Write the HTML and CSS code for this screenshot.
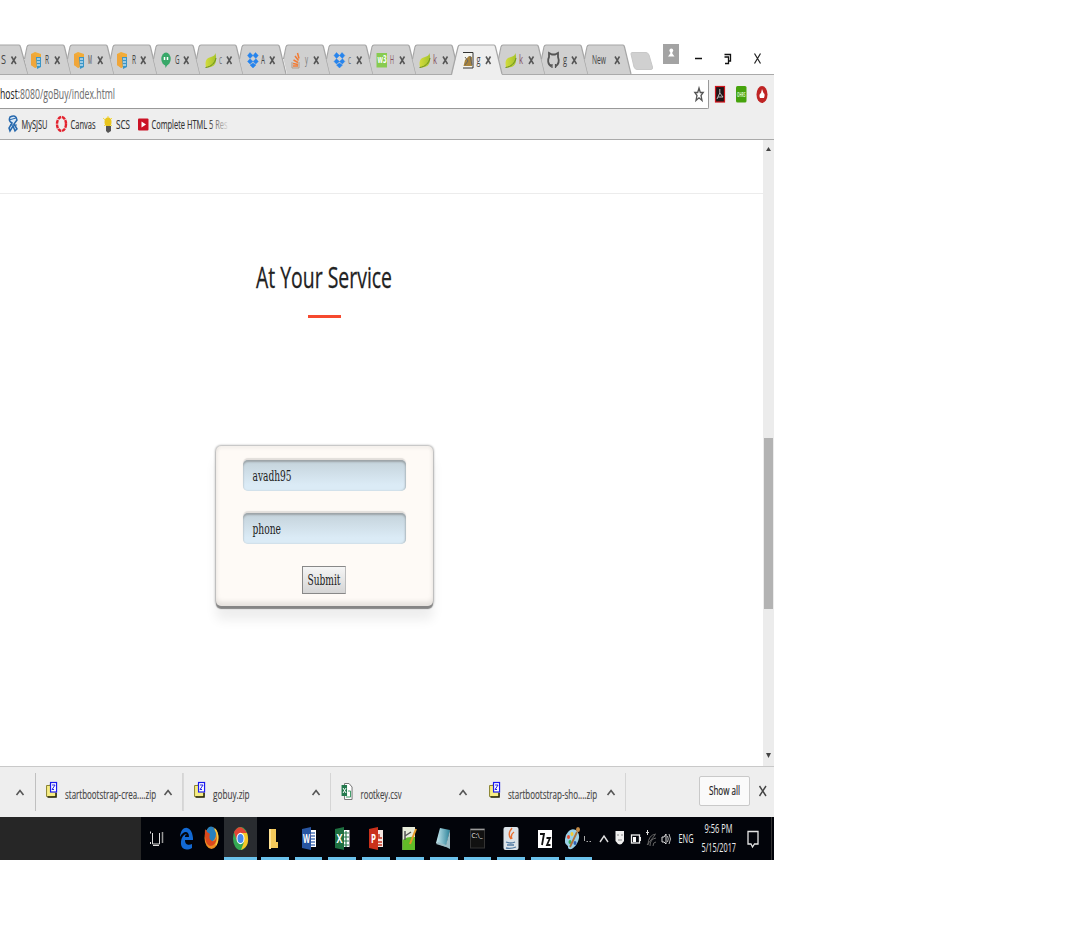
FILE: index.html
```html
<!DOCTYPE html>
<html lang="en">
<head>
<meta charset="utf-8">
<title>goBuy</title>
<link rel="stylesheet" href="styles.css">
</head>
<body>
<svg class="defs" width="0" height="0">
  <defs>
    <linearGradient id="leafg" x1="0" x2="1"><stop offset="0" stop-color="#d3dc3c"/><stop offset="1" stop-color="#a5c32c"/></linearGradient>
    <symbol id="shape" overflow="visible"><path d="M3 1L-.5 15L3 30H46L39 1Z" fill="#d0d0d0"/><path d="M-.5 15L2 3Q2.500 1 4 1H38Q39 1 39.500 3L46 30" fill="none" stroke="#a6a6a6" stroke-width="1.200"/></symbol>
    <symbol id="x" overflow="visible"><path d="M30 12.500L34.500 20M34.500 12.500L30 20" stroke="#555" stroke-width="1.500"/></symbol>
    <symbol id="aws" overflow="visible"><path d="M6 10L10 8L16 10V21L10 24L6 21Z" fill="#f2ac38"/><path d="M6 10L11 12V24L6 21Z" fill="#f0a63a"/><path d="M11 13H16V23L12 25Z" fill="#3a96c8"/><path d="M12 15H15M12 18H15M12 21H15" stroke="#fff"/></symbol>
    <symbol id="leaf" overflow="visible"><path d="M14.500 9C16.500 19 14 24 5 23.500C3.500 16 6 14 10 13C13 12 14 11 14.500 9Z" fill="url(#leafg)"/><path d="M4.500 23.500C10 23 14 19 15 14" fill="none" stroke="#678b22"/></symbol>
    <symbol id="drop" overflow="visible"><path d="M8 8.500L11 11.500L8 14.500L5.500 11.500ZM13.500 8.500L16.300 11.500L13.800 14.500L11 11.500ZM8 14.800L11 17.500L8 20L5.500 17.500ZM14 14.800L16.300 17.500L13.800 20L11 17.500ZM11 19L14 21L11 24L8 21Z" fill="#2684ed" stroke="#2684ed" stroke-width=".4"/></symbol>
    <symbol id="zip" overflow="visible"><path d="M46.500 18.500H50V17.500H56V29.500Q50 30.500 46.500 29.500Z" fill="#f7ed83" stroke="#8a8432"/><path d="M47.500 30H56V26" fill="none" stroke="#29280b" stroke-width="1.500"/><rect x="50.500" y="15.500" width="6" height="9.500" fill="#fff" stroke="#1a1aee" stroke-width="1.200"/><path d="M52 18H55L52 22.500H54" fill="none" stroke="#2020e8"/></symbol>
    <symbol id="chev" overflow="visible"><path d="M0 5.500L3.500 1L7 5.500" fill="none" stroke="#555" stroke-width="1.600"/></symbol>
    <linearGradient id="note" x1="0" x2="1"><stop offset="0" stop-color="#c9eaf0"/><stop offset="1" stop-color="#2b8299"/></linearGradient>
  </defs>
</svg>
<div class="screen">
  <header>
    <div class="tabs">
      <svg class="tab first"><path d="M0 1H19Q20 1 20.500 3L28 30H0Z" fill="#d0d0d0"/><path d="M0 1H19Q20 1 20.500 3L28 30" fill="none" stroke="#a6a6a6" stroke-width="1.200"/><text x="1" y="20" textLength="5" lengthAdjust="spacingAndGlyphs">S</text><path d="M11.500 12.500L16 20M16 12.500L11.500 20" stroke="#555" stroke-width="1.500"/></svg>
      <svg class="tab"><use href="#shape"/><use href="#aws"/><text x="20" y="20" textLength="4" lengthAdjust="spacingAndGlyphs">R</text><use href="#x"/></svg>
      <svg class="tab"><use href="#shape"/><use href="#aws"/><text x="20" y="20" textLength="4" lengthAdjust="spacingAndGlyphs">M</text><use href="#x"/></svg>
      <svg class="tab"><use href="#shape"/><use href="#aws"/><text x="21" y="20" textLength="4" lengthAdjust="spacingAndGlyphs">R</text><use href="#x"/></svg>
      <svg class="tab"><use href="#shape"/><ellipse cx="12" cy="15" rx="4.700" ry="6.500" fill="#38a869"/><path d="M11 20H14L11.500 24Z" fill="#38a869"/><path d="M10.500 13V16M13.500 13V16" stroke="#fff" stroke-width="1.500"/><text x="21" y="20" textLength="4.500" lengthAdjust="spacingAndGlyphs">G</text><use href="#x"/></svg>
      <svg class="tab"><use href="#shape"/><use href="#leaf" x="4"/><text class="dim" x="22" y="20" textLength="3" lengthAdjust="spacingAndGlyphs">c</text><use href="#x"/></svg>
      <svg class="tab"><use href="#shape"/><use href="#drop" x="2"/><text x="21" y="20" textLength="4" lengthAdjust="spacingAndGlyphs">A</text><use href="#x"/></svg>
      <svg class="tab"><use href="#shape"/><path d="M8 18V24H15V18" fill="none" stroke="#b59b87"/><path d="M9 22H14M9 19.500L14 20.500M9.500 16L14 18.500M11 12L14.500 16.500M13.500 9L15 14.500" stroke="#f27b34" stroke-width="1.500"/><text class="dim" x="21" y="20" textLength="3" lengthAdjust="spacingAndGlyphs">y</text><use href="#x"/></svg>
      <svg class="tab"><use href="#shape"/><use href="#drop" x="1.500"/><text class="dim" x="21" y="20" textLength="3" lengthAdjust="spacingAndGlyphs">c</text><use href="#x"/></svg>
      <svg class="tab"><use href="#shape"/><rect x="6.500" y="9" width="10.500" height="14.500" fill="#87cb50"/><text class="w3" x="7.500" y="19" textLength="9" lengthAdjust="spacingAndGlyphs">w3</text><text class="red" x="20" y="20" textLength="4" lengthAdjust="spacingAndGlyphs">H</text><use href="#x"/></svg>
      <svg class="tab"><use href="#shape"/><use href="#leaf" x="2"/><text class="red" x="20" y="20" textLength="4" lengthAdjust="spacingAndGlyphs">k</text><use href="#x"/></svg>
      <svg class="tab active"><path d="M-4 31L2 3Q2.500 1 4 1H38Q39 1 39.500 3L46 31Z" fill="#eee"/><path d="M-4.500 30L2 3Q2.500 1 4 1H38Q39 1 39.500 3L46 30" fill="none" stroke="#a6a6a6" stroke-width="1.200"/><path d="M7 8.500H17V24H7" fill="#f5f5f0" stroke="#333"/><path d="M7.500 22L9 16L13 12L16 13V22Z" fill="#a9843c"/><path d="M9 13L12 17L9 21M14 12L16 21" fill="none" stroke="#666"/><text x="20.500" y="20" textLength="4" lengthAdjust="spacingAndGlyphs">g</text><use href="#x"/></svg>
      <svg class="tab"><use href="#shape"/><use href="#leaf" x="2"/><text class="red" x="20" y="20" textLength="4" lengthAdjust="spacingAndGlyphs">k</text><use href="#x"/></svg>
      <svg class="tab"><use href="#shape"/><path d="M9.500 22.500C5 20 6 15 7 13V9L10 10.500H13L16 9V13C17.500 17 17 20 13.500 22.500" fill="none" stroke="#555" stroke-width="1.800"/><path d="M10 20V24M13.500 20V24M7 20L10 22" stroke="#555" stroke-width="1.200"/><text x="21" y="20" textLength="4" lengthAdjust="spacingAndGlyphs">g</text><use href="#x"/></svg>
      <svg class="tab"><use href="#shape"/><text x="7" y="20" textLength="14" lengthAdjust="spacingAndGlyphs">New</text><use href="#x"/></svg>
      <svg class="newtab" width="26" height="30"><path d="M2 8.500H16Q18 8.500 19 11L22.500 23Q23 25.500 21 25.500H7Q5 25.500 4 23L1 10Q1 8.500 2 8.500Z" fill="#d0d0d0" stroke="#c8c8c8"/></svg>
      <svg class="controls" width="110" height="30"><rect x="0" width="16" height="20" fill="#a3a3a3"/><circle cx="8.300" cy="6.500" r="1.900" fill="#fff"/><path d="M7.300 8H9.300V9.500L11.500 12.500H5L7.300 9.500Z" fill="#fff"/><path d="M32 14.500H39" stroke="#111" stroke-width="1.500"/><path d="M61.500 10.500H67.500V17H66M61.500 13H65.500V19.500H62" fill="none" stroke="#111" stroke-width="1.300"/><path d="M91.500 9.500L97.500 19.500M97.500 9.500L91.500 19.500" stroke="#222" stroke-width="1.200"/></svg>
    </div>
    <div class="toolbar">
      <div class="address">
        <svg class="addr" width="130" height="28"><text x="0" y="19" textLength="115" lengthAdjust="spacingAndGlyphs"><tspan class="host">host</tspan><tspan class="url">:8080/goBuy/index.html</tspan></text></svg>
        <svg width="14" height="28"><path d="M8 8L9.300 12.500H12.200L10 15.500L11 20.500L8 17.800L5 20.500L6 15.500L3.800 12.500H6.700Z" fill="none" stroke="#555" stroke-width="1.300"/></svg>
      </div>
      <svg class="exts" width="60" height="28"><rect x="1.500" y="6.500" width="9" height="15.500" fill="#211517" stroke="#d0141c" stroke-width="1.200"/><path d="M5.800 9V13L3 19M5.800 13L9 17L4 17" fill="none" stroke="#bbb"/><rect x="22" y="6" width="10.500" height="16.500" rx="1.500" fill="#46a30c"/><text class="badge" x="23" y="16.500" textLength="8.500" lengthAdjust="spacingAndGlyphs">OHRS</text><ellipse cx="48" cy="14.500" rx="5.500" ry="8.500" fill="#bf2424"/><path d="M46 18Q44.500 14 47 13L48 9L49.500 13Q51.500 14 50 18Z" fill="#fff"/></svg>
    </div>
    <div class="bookmarks">
      <svg width="240" height="30"><path d="M10 8Q16 5 17 11L14 15L17 20L15 22L13 17L10 22L9 19L12 14Q8 12 10 8Z" fill="#d9e8f7" stroke="#2668ad" stroke-width="1.500"/><path d="M9 11L16 9M10 16H17" stroke="#2668ad"/><text x="21.500" y="19.500" textLength="26" lengthAdjust="spacingAndGlyphs">MySJSU</text>
      <ellipse cx="61.500" cy="15" rx="4.500" ry="7" fill="none" stroke="#e3212d" stroke-width="2.400" stroke-dasharray="3.800 .8"/><text x="70.500" y="19.500" textLength="25" lengthAdjust="spacingAndGlyphs">Canvas</text>
      <path d="M103 9L112 17M112 9L104 17M108 7V12" stroke="#f3dc3c"/><ellipse cx="108" cy="13" rx="3.500" ry="4.500" fill="#e9c51d"/><path d="M106 17H111V22L108 24L106 22Z" fill="#555"/><text x="116" y="19.500" textLength="14" lengthAdjust="spacingAndGlyphs">SCS</text>
      <rect x="138" y="9.500" width="10.500" height="12" rx="1" fill="#cb1225"/><path d="M141.500 12.500L146 15.500L141.500 18.500Z" fill="#fff"/><text x="151.500" y="19.500" textLength="76" lengthAdjust="spacingAndGlyphs">Complete HTML 5 Res</text></svg>
      <i class="fade"></i>
    </div>
  </header>
  <div class="viewport">
    <main>
      <div class="rule"></div>
      <h2><svg width="150" height="44"><text x="2" y="33" textLength="136" lengthAdjust="spacingAndGlyphs">At Your Service</text></svg></h2>
      <div class="divider"></div>
      <form>
        <div class="field"><svg width="100" height="31"><text x="9.500" y="21" textLength="39" lengthAdjust="spacingAndGlyphs">avadh95</text></svg></div>
        <div class="field"><svg width="100" height="31"><text x="9.500" y="21" textLength="28.500" lengthAdjust="spacingAndGlyphs">phone</text></svg></div>
        <button type="button"><svg width="42" height="26"><text x="4.500" y="18" textLength="33" lengthAdjust="spacingAndGlyphs">Submit</text></svg></button>
      </form>
    </main>
    <aside class="scroll"><svg width="11" height="20"><path d="M3 11L5.500 7L8 11Z" fill="#444"/></svg><div class="thumb"></div><svg width="11" height="20"><path d="M3 7L5.500 12L8 7Z" fill="#444"/></svg></aside>
  </div>
  <div class="downloads">
    <svg class="dl lead" width="36" height="50"><use href="#chev" x="16.500" y="22.500"/><path d="M35.500 6V44" stroke="#c0c0c0"/></svg>
    <svg class="dl" viewBox="36 0 147.500 50"><use href="#zip"/><text x="65" y="32" textLength="91" lengthAdjust="spacingAndGlyphs">startbootstrap-crea....zip</text><use href="#chev" x="164.500" y="22.500"/><path d="M182.900 6V44" stroke="#c0c0c0"/></svg>
    <svg class="dl" viewBox="36 0 147.500 50"><use href="#zip"/><text x="65" y="32" textLength="36.500" lengthAdjust="spacingAndGlyphs">gobuy.zip</text><use href="#chev" x="164.500" y="22.500"/><path d="M182.900 6V44" stroke="#c0c0c0"/></svg>
    <svg class="dl" viewBox="36 0 147.500 50"><path d="M49.500 16.500H54L57 20V32.500H49.500Z" fill="#fff" stroke="#777"/><rect x="46.500" y="18" width="5.500" height="11" fill="#23794d"/><path d="M48 21L51 26M51 21L48 26" stroke="#fff"/><path d="M53 24H55.500V30H51" fill="none" stroke="#3a9a63"/><text x="65.500" y="32" textLength="41" lengthAdjust="spacingAndGlyphs">rootkey.csv</text><use href="#chev" x="164.500" y="22.500"/></svg>
    <svg class="dl" viewBox="36 0 147.500 50"><use href="#zip"/><text x="65" y="32" textLength="89" lengthAdjust="spacingAndGlyphs">startbootstrap-sho....zip</text><use href="#chev" x="164.500" y="22.500"/><path d="M182.900 6V44" stroke="#c0c0c0"/></svg>
    <div class="showall"><svg width="48" height="28"><text x="9" y="18" textLength="31" lengthAdjust="spacingAndGlyphs">Show all</text></svg></div>
    <svg class="close" width="10" height="50"><path d="M1.500 19L8 29M8 19L1.500 29" stroke="#444" stroke-width="1.400"/></svg>
  </div>
  <footer>
    <div class="search"></div>
    <svg class="app plain" width="30"><path d="M11.500 16V27H18.500V16M9.500 14.500V16.500M9.500 25V27M12 28.500H18" fill="none" stroke="#ddd"/><path d="M21.500 15V26" stroke="#999" stroke-width="1.500"/></svg>
    <svg class="app plain" width="30"><path d="M9 20C10 7 21 8 22 21V23H14C14 29 19 28 21 27V31C14 35 8 31 10.500 22C12 18 14 17 16 17C14 18 14 19 14 20H18C18 13 12 14 9 20Z" fill="#1269d3"/></svg>
    <svg class="app plain firefox" width="23"><ellipse cx="10.500" cy="21" rx="7" ry="11" fill="#ee8d22"/><ellipse cx="10" cy="17" rx="5" ry="7.500" fill="#2880bd"/><path d="M4 12Q6 16 9 17Q7 22 11 24Q14 25 16 20Q15 29 9 29Q3 27 4 12Z" fill="#db481d"/><path d="M14 12Q19 19 15 28" fill="none" stroke="#f8cb42" stroke-width="1.500"/></svg>
    <svg class="app chrome" width="33"><ellipse cx="16.500" cy="21.500" rx="7.500" ry="11.500" fill="#35a853"/><path d="M10 15Q16 5 23 16L17 18L13 24Z" fill="#e14434"/><path d="M23 16Q27 29 17 33L20 25L16 16Z" fill="#f6c827"/><ellipse cx="16.500" cy="21.500" rx="4" ry="5.800" fill="#fff"/><ellipse cx="16.500" cy="21.500" rx="3" ry="4.500" fill="#4589ed"/></svg>
    <svg class="app run"><path d="M8 12H15V25H17V31H8Z" fill="#f4c95b"/><path d="M8 12H10V32H8Z" fill="#ffe293"/></svg>
    <svg class="app run"><path d="M15 13H21V30H15" fill="#fff"/><path d="M15 16H20M15 19H20M15 22H20M15 25H20M15 28H20" stroke="#5278b9" stroke-width="1.500"/><path d="M7 12L16 10V33L7 31Z" fill="#2855a1"/><text class="office" x="8" y="26" textLength="7" lengthAdjust="spacingAndGlyphs">W</text></svg>
    <svg class="app run"><path d="M15 13H21.500V30H15" fill="#fff"/><path d="M15 16H21M15 20H21M15 24H21M15 28H21M18 14V30" stroke="#287a4c" stroke-width="1.200"/><path d="M7 12L16 10V33L7 31Z" fill="#1e7040"/><text class="office" x="8.500" y="26" textLength="6" lengthAdjust="spacingAndGlyphs">X</text></svg>
    <svg class="app run"><path d="M15 13H21V30H15" fill="#f6e7e2"/><path d="M17 17V21H20M16 25H20M16 28H20" fill="none" stroke="#c43622" stroke-width="1.500"/><path d="M7 12L16 10V33L7 31Z" fill="#c9301b"/><text class="office" x="9" y="26" textLength="5" lengthAdjust="spacingAndGlyphs">P</text></svg>
    <svg class="app run"><rect x="6.500" y="10" width="12.500" height="23" fill="#e7ecda"/><path d="M6.500 23Q12 19 19 20V33H6.500Z" fill="#61bc28"/><path d="M9 14V23M9 19L15 15" stroke="#555" stroke-width="1.500"/><path d="M20 12L14 27" stroke="#e79a28" stroke-width="2"/></svg>
    <svg class="app run"><path d="M10 11L20 13L16 30L6 26Z" fill="url(#note)"/><path d="M20 13V32L16 30L6 27L8 25L16 28Z" fill="#9abcc5"/></svg>
    <svg class="app run"><rect x="6.500" y="12" width="14" height="19" fill="#111" stroke="#333"/><path d="M6.500 12.500H20.500" stroke="#999" stroke-width="1.500"/><text class="cmd" x="7.500" y="21" textLength="11" lengthAdjust="spacingAndGlyphs">C:\_</text></svg>
    <svg class="app run"><rect x="6.500" y="10" width="15" height="23" rx="2" fill="#dce3e9"/><path d="M15 11Q10 17 14 22M17 15Q13 18 15 22" fill="none" stroke="#e76f32" stroke-width="1.400"/><path d="M9 25Q14 27 18 25M10 28H17M9 31Q14 32 19 30" fill="none" stroke="#527ba2" stroke-width="1.300"/></svg>
    <svg class="app run"><rect x="7" y="13" width="14" height="18" fill="#fff"/><path d="M9 17H13L11 28M15.500 21H19L16 28H19.500" fill="none" stroke="#111" stroke-width="1.800"/></svg>
    <svg class="app run paint"><path d="M3 15C8 9 15 14 14 21C13 28 6 35 3 31C4 27 -1 29 0 22Q0 18 3 15Z" fill="#9bd1e8"/><ellipse cx="3.500" cy="20" rx="1.500" ry="2" fill="#e44d34"/><ellipse cx="7" cy="17" rx="1.500" ry="2" fill="#f2ca33"/><ellipse cx="5" cy="25" rx="1.500" ry="2" fill="#3caf59"/><ellipse cx="10" cy="26" rx="1.500" ry="2" fill="#315fb3"/><path d="M12 15L5 30" stroke="#ac713c" stroke-width="1.800"/><ellipse cx="13" cy="12.500" rx="2" ry="2.500" fill="#c38a46"/><path d="M19.500 19V24M21.500 24.500H23M24.500 24.500H26" stroke="#aaa"/></svg>
    <svg class="tray" viewBox="592 0 182 43" width="182" height="43"><path d="M600 25L604 19L608 25" fill="none" stroke="#ddd" stroke-width="1.400"/><path d="M615.500 14H624V24Q620 31 615.500 24Z" fill="#eee"/><path d="M617 18H619M621 18H623M618 23H622" stroke="#888"/><rect x="631.500" y="18" width="8" height="8" fill="none" stroke="#eee" stroke-width="1.300"/><path d="M634.500 20V25" stroke="#fff" stroke-width="3"/><path d="M640.500 20V24" stroke="#eee"/><path d="M647.500 13V18M646 15.500H649" stroke="#ddd"/><path d="M648 28Q648 18 656 17M650 29Q650 22 656 21M653 29Q653 25 656 25M647 28L655 18" fill="none" stroke="#666"/><path d="M662 20H664L666 17V27L664 25H662Z" fill="none" stroke="#ddd"/><path d="M667.500 19Q669 22 667.500 25M669 17Q672 22 669 27" fill="none" stroke="#bbb"/><text x="678.500" y="26" textLength="15" lengthAdjust="spacingAndGlyphs">ENG</text><text x="704.500" y="16" textLength="28" lengthAdjust="spacingAndGlyphs">9:56 PM</text><text x="701.500" y="35" textLength="34.500" lengthAdjust="spacingAndGlyphs">5/15/2017</text><path d="M748 14.500H758V27H754.500L752.500 30L751 27H748Z" fill="none" stroke="#e5e5e5" stroke-width="1.300"/><path d="M771.500 0V43" stroke="#333"/></svg>
  </footer>
</div>
</body>
</html>
```
FILE: styles.css
```css
body { margin: 0; background: #fff; font-family: "Open Sans", "Noto Sans", sans-serif; }
* { box-sizing: border-box; }
svg { display: block; flex: none; }
.defs { position: absolute; }
.screen { width: 774px; padding-top: 44px; }
.tabs { display: flex; height: 31px; border-bottom: 1px solid #aaa; }
.tab { width: 43.1px; height: 31px; overflow: visible; }
.tab.first { width: 25px; }
.tab.active { position: relative; z-index: 1; }
.tab text { font-size: 12px; fill: #444; }
.tab .dim { fill: #777; }
.tab .red { fill: #865260; }
.tab .w3 { fill: #fff; font-size: 10px; font-weight: bold; }
.newtab { margin: 0 6px 0 2px; }
.controls { margin-left: 1px; }
.toolbar { display: flex; height: 34px; padding-top: 5px; background: #eee; }
.address { display: flex; justify-content: space-between; width: 709px; height: 29px; padding-right: 3px; background: #fff; border-right: 1px solid #999; border-bottom: 1px solid #999; border-radius: 0 0 2px 0; }
.address text { font-size: 14px; stroke: #777; stroke-width: .1px; }
.host { fill: #222; }
.url { fill: #707070; }
.exts { margin-left: 5px; }
.badge { font-size: 7px; font-weight: bold; fill: #d9efcb; }
.bookmarks { display: flex; height: 31px; background: #eee; border-bottom: 1px solid #aaa; }
.bookmarks text { font-size: 13px; fill: #333; stroke: #333; stroke-width: .15px; }
.fade { width: 22px; height: 25px; margin-left: -32px; background: linear-gradient(90deg, rgba(238,238,238,0), #eee); }
.viewport { display: flex; height: 626px; }
main { width: 763px; display: flex; flex-direction: column; }
.rule { height: 54px; border-bottom: 1px solid #ececec; flex: none; }
h2 { margin: 61px 0 0 254px; height: 44px; font-weight: normal; }
h2 text { font-size: 30px; fill: #222; stroke: #222; stroke-width: .3px; }
.divider { width: 33px; height: 3px; margin: 16px 0 0 308px; background: #f6492f; }
form { display: flex; flex-direction: column; align-items: center; width: 217px; height: 160px; margin: 128px 0 0 216px; padding-top: 14px; border-radius: 5px; background: #fefaf6; box-shadow: 0 3px 1px #858585, 0 0 2px 1px #b5b5b5, 0 14px 12px rgba(0,0,0,.07), inset 0 3px 3px rgba(0,0,0,.04), inset 0 -4px 5px rgba(0,0,0,.1); }
.field { width: 163px; height: 31px; margin-bottom: 22px; border-radius: 5px; background: linear-gradient(#c4d2da, #dbebf6 80%); box-shadow: 0 -2px 1px #e2dedb, inset 0 2px 2px #9ca3a7, inset -1px 0 2px #b9c6cd; }
form text { font-family: "DejaVu Serif", serif; font-size: 14px; fill: #222; }
button { width: 44px; height: 28px; margin-right: 1px; padding: 0; border: 1px solid #888; border-right-color: #bbb; background: linear-gradient(#f5f5f5, #d5d5d5); }
.scroll { width: 11px; background: #ececec; }
.thumb { width: 9px; height: 171px; margin: 278px 0 137px 1px; background: #b3b3b3; }
.downloads { display: flex; height: 51px; background: #eee; border-top: 1px solid #c9c9c9; }
.dl { width: 147.600px; height: 50px; }
.dl.lead { width: 36px; }
.dl text { font-size: 13px; fill: #444; stroke: #444; stroke-width: .15px; }
.showall { width: 51px; height: 30px; margin: 9px 8px 0 73px; background: #fafafa; border: 1px solid #c9c9c9; border-radius: 2px; }
.showall text { font-size: 13px; fill: #222; stroke: #222; stroke-width: .2px; }
footer { display: flex; height: 43px; background: #02040a; }
.search { width: 141px; background: #262626; }
.app { width: 27.800px; height: 43px; margin-right: 6px; border-bottom: 3px solid #6bc2ec; }
.app.plain { width: 30px; margin: 0; border: 0; }
.app.firefox { width: 23px; }
.app.chrome { width: 33px; margin-right: 4px; background: #292c30; }
.app.paint { width: 27px; margin-right: 0; }
.office { font-size: 12px; font-weight: bold; fill: #fff; }
.cmd { font-size: 7px; fill: #eee; }
.tray text { font-size: 12.500px; fill: #eee; }
```
